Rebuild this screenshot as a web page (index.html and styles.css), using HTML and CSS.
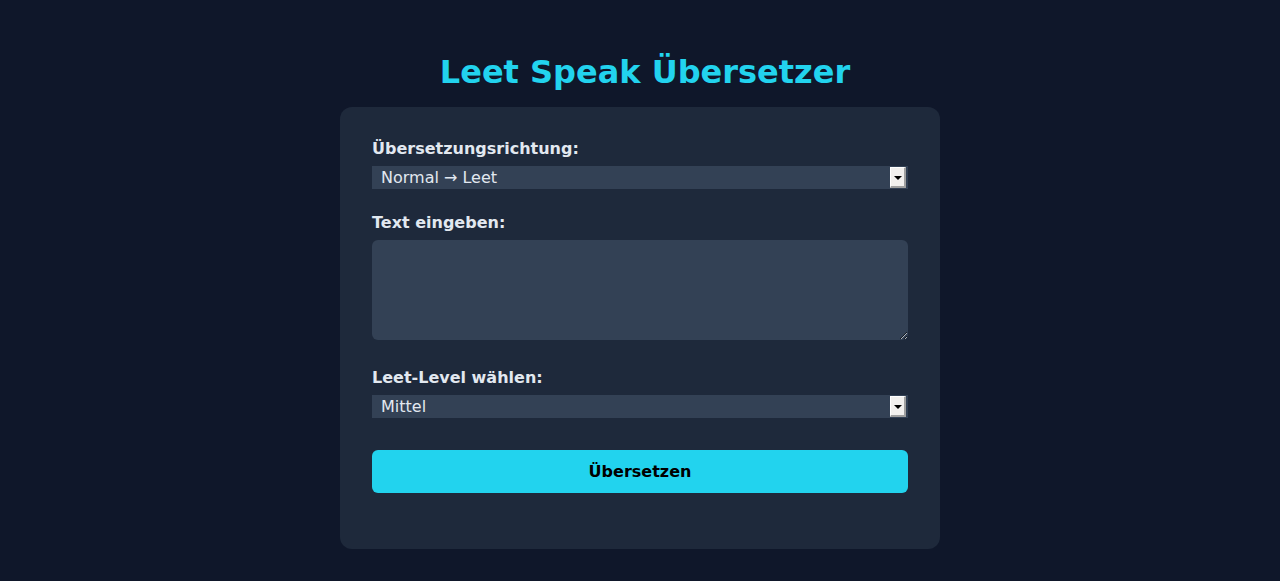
FILE: index.html
```html
<!DOCTYPE html>
<html lang="de">
<head>
<meta charset="utf-8">
<title>Leet Speak Übersetzer</title>
<link rel="stylesheet" href="styles.css">
</head>
<body>
<h1 class="title">Leet Speak Übersetzer</h1>
<main class="card">
  <label class="label" for="dir">Übersetzungsrichtung:</label>
  <div class="select-wrap">
    <select id="dir" class="select">
      <option>Normal → Leet</option>
      <option>Leet → Normal</option>
    </select>
    <span class="select-btn" aria-hidden="true"><span class="select-tri"></span></span>
  </div>
  <label class="label" for="text">Text eingeben:</label>
  <textarea id="text" class="textarea"></textarea>
  <label class="label" for="level">Leet-Level wählen:</label>
  <div class="select-wrap select-wrap-last">
    <select id="level" class="select">
      <option>Leicht</option>
      <option selected>Mittel</option>
      <option>Schwer</option>
    </select>
    <span class="select-btn" aria-hidden="true"><span class="select-tri"></span></span>
  </div>
  <button class="button" type="button">Übersetzen</button>
</main>
</body>
</html>
```
FILE: styles.css
```css
html, body {
  margin: 0;
  background: #0f172a;
}
body {
  font-family: "DejaVu Sans", sans-serif;
  color: #e2e8f0;
  padding-top: 54px;
  min-height: 581px;
  box-sizing: border-box;
}
.title {
  margin: 0 0 16px;
  padding-left: 10px;
  text-align: center;
  font-size: 32px;
  font-weight: bold;
  color: #22d3ee;
  line-height: 37px;
}
.card {
  width: 600px;
  box-sizing: border-box;
  margin: 0 auto;
  background: #1e293b;
  border-radius: 12px;
  padding: 32px 32px 56px;
  display: flex;
  flex-direction: column;
}
.label {
  display: block;
  font-weight: bold;
  font-size: 16px;
  line-height: 19px;
  margin-bottom: 8px;
  color: #e2e8f0;
}
.select-wrap {
  position: relative;
  margin: 0 0 24px;
}
.select-wrap-last {
  margin-bottom: 32px;
}
.select {
  display: block;
  width: 100%;
  height: 23px;
  border: none;
  border-radius: 0;
  -webkit-appearance: none;
  appearance: none;
  background: #334155;
  color: #e2e8f0;
  font-family: "DejaVu Sans", sans-serif;
  font-size: 16px;
  padding: 0 9px;
  margin: 0;
}
.select-btn {
  position: absolute;
  right: 2px;
  top: 1px;
  width: 16px;
  height: 21px;
  box-sizing: border-box;
  background: #f2f0ee;
  border-top: 1px solid #ffffff;
  border-left: 1px solid #ffffff;
  border-right: 2px solid #a0a0a0;
  border-bottom: 2px solid #a0a0a0;
  pointer-events: none;
}
.select-tri {
  position: absolute;
  left: 3px;
  top: 8px;
  width: 0;
  height: 0;
  border-left: 4px solid transparent;
  border-right: 4px solid transparent;
  border-top: 4px solid #000;
}
.textarea {
  display: block;
  width: 100%;
  height: 100px;
  box-sizing: border-box;
  border: none;
  border-radius: 6px;
  background: #334155;
  color: #e2e8f0;
  font-family: "DejaVu Sans", sans-serif;
  font-size: 16px;
  padding: 8px;
  margin: 0 0 28px;
}
.button {
  display: block;
  width: 100%;
  height: 43px;
  border: none;
  border-radius: 6px;
  background: #22d3ee;
  color: #000;
  font-family: "DejaVu Sans", sans-serif;
  font-size: 16px;
  font-weight: bold;
}
```
